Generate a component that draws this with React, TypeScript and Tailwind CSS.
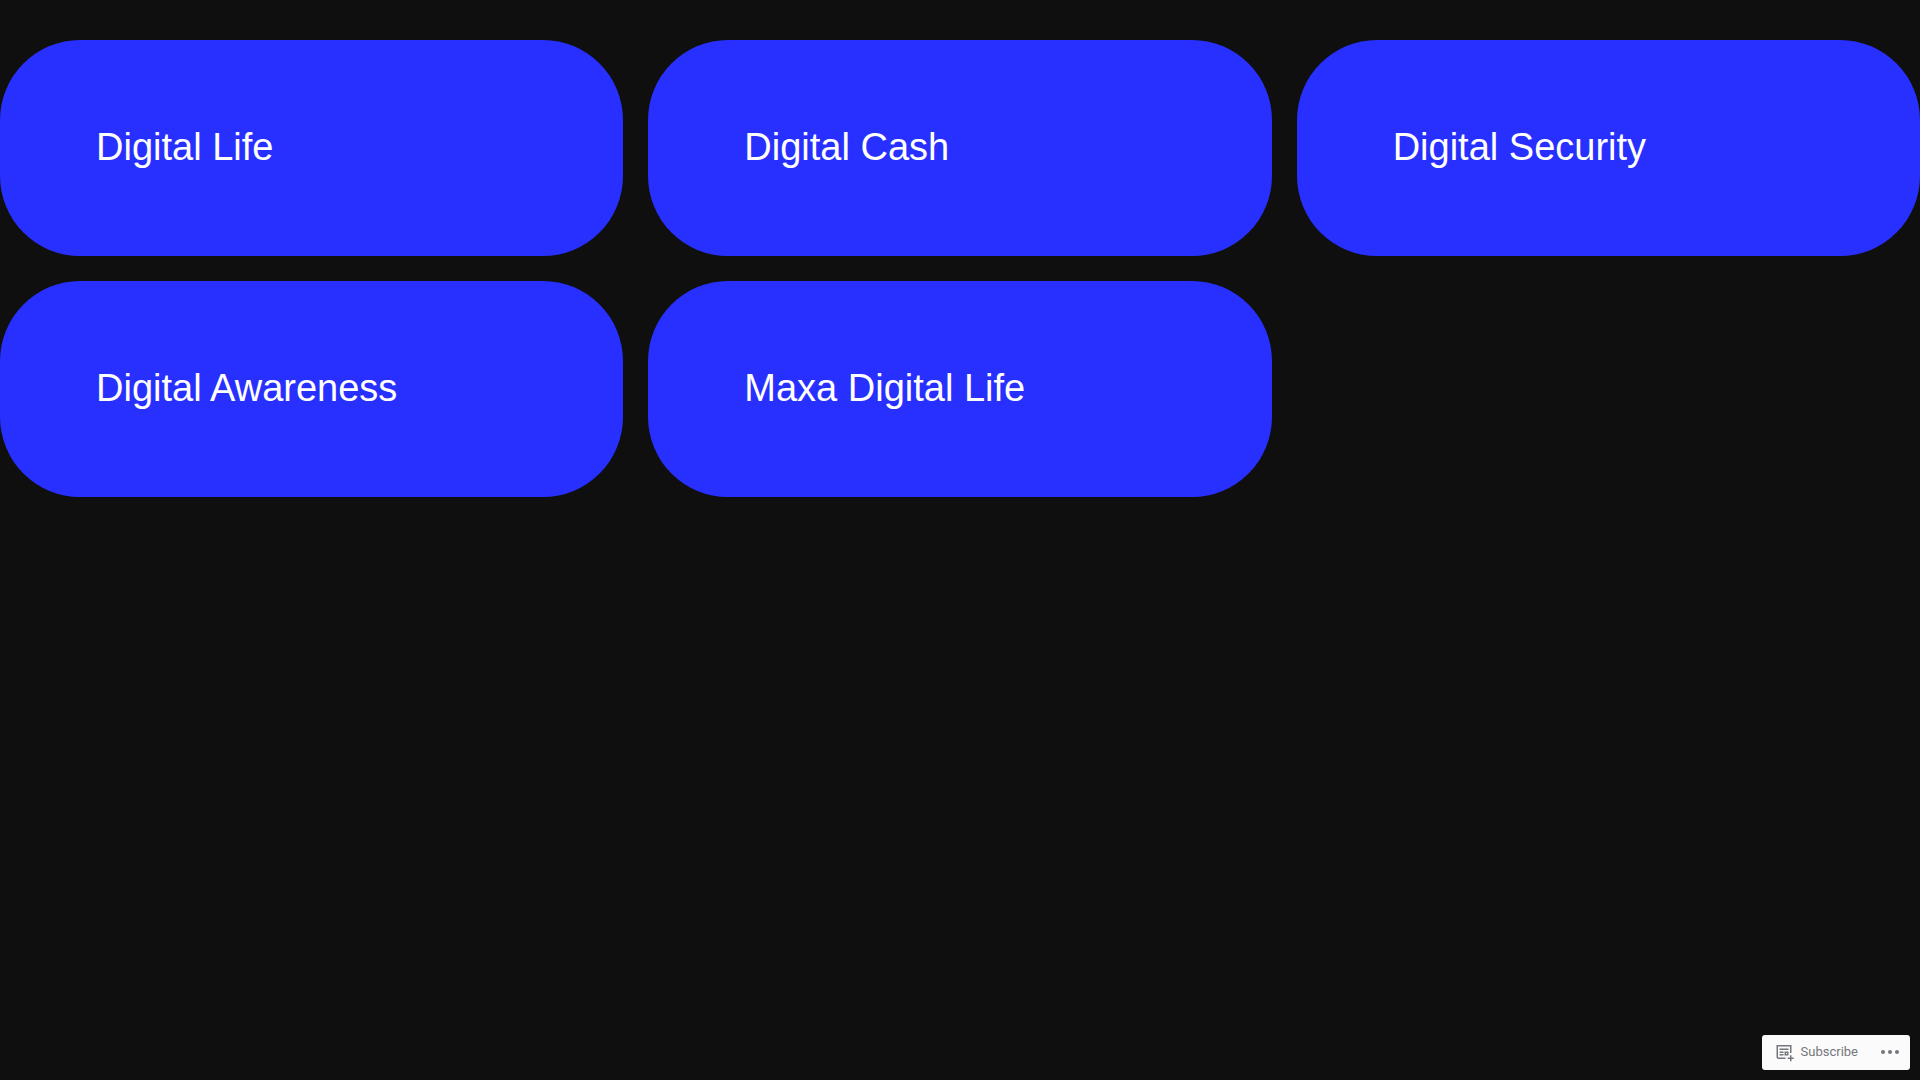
const categories = [
  { href: '#digital-life', label: 'Digital Life' },
  { href: '#digital-cash', label: 'Digital Cash' },
  { href: '#digital-security', label: 'Digital Security' },
  { href: '#digital-awareness', label: 'Digital Awareness' },
  { href: '#maxa-digital-life', label: 'Maxa Digital Life' },
];

function FollowIcon() {
  return (
    <svg className="size-5 shrink-0 fill-current" viewBox="0 0 20 20" aria-hidden="true">
      <path
        fillRule="evenodd"
        clipRule="evenodd"
        d="m4 4.5h12v6.5h1.5v-6.5-1.5h-1.5-12-1.5v1.5 10.5c0 1.10457.89543 2 2 2h7v-1.5h-7c-.27614 0-.5-.2239-.5-.5zm10.5 2h-9v1.5h9zm-5 3h-4v1.5h4zm3.5 1.5h-1v1h1zm-1-1.5h-1.5v1.5 1 1.5h1.5 1 1.5v-1.5-1-1.5h-1.5zm-2.5 2.5h-4v1.5h4zm6.5 1.25h1.5v2.25h2.25v1.5h-2.25v2.25h-1.5v-2.25h-2.25v-1.5h2.25z"
      />
    </svg>
  );
}

function EllipsisIcon() {
  return (
    <svg className="size-6 shrink-0 fill-current" viewBox="0 0 24 24" aria-hidden="true">
      <circle cx="5" cy="12" r="2" />
      <circle cx="12" cy="12" r="2" />
      <circle cx="19" cy="12" r="2" />
    </svg>
  );
}

function ActionBar() {
  return (
    <div className="fixed bottom-[10px] right-[10px] flex h-[35px] items-center gap-5 rounded-[3px] bg-[#fbfbfb] pb-px pl-3 pr-2 font-[Roboto,sans-serif] text-[13px] leading-5 text-[#73777c]">
      <button type="button" className="flex items-center gap-[7px]">
        <FollowIcon />
        Subscribe
      </button>
      <button type="button" aria-label="More options">
        <EllipsisIcon />
      </button>
    </div>
  );
}

export default function App() {
  return (
    <div className="min-h-screen bg-[#0f0f0f] font-['Liberation_Sans',Arial,sans-serif]">
      <main className="grid grid-cols-1 gap-[25px] pt-10 md:grid-cols-2 lg:grid-cols-3">
        {categories.map(({ href, label }) => (
          <a key={href} href={href} className="rounded-[80px] bg-[#2830ff] px-24 pt-20 pb-[82px] text-[38px] leading-[54px] text-white">
            {label}
          </a>
        ))}
      </main>
      <ActionBar />
    </div>
  );
}
